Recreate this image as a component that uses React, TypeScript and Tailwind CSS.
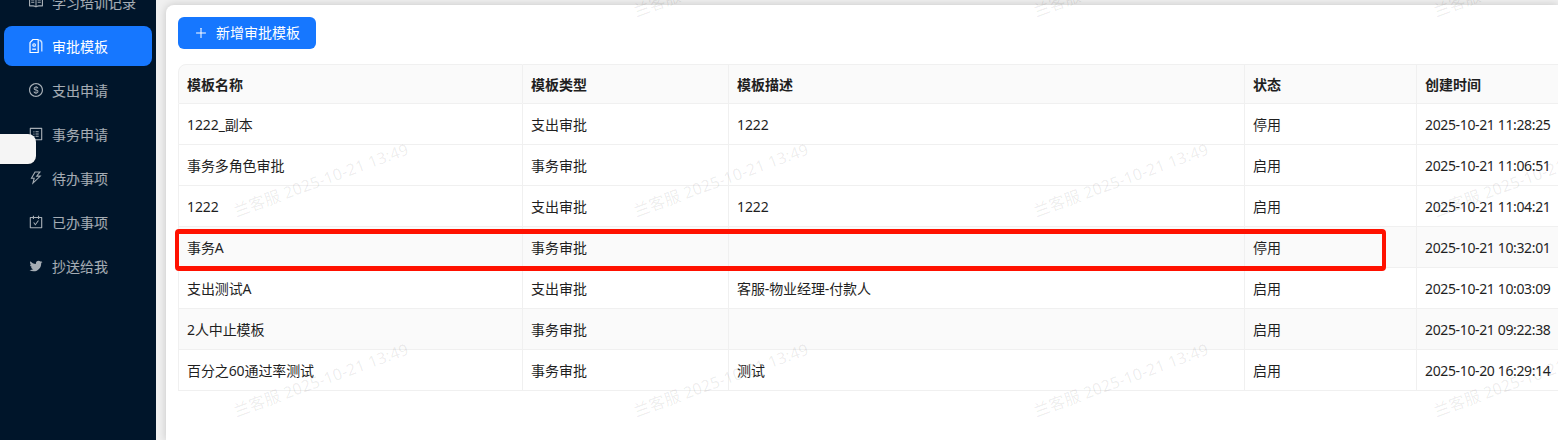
import {
  AiOutlineRead,
  AiOutlineDollar,
  AiOutlineProfile,
  AiOutlineThunderbolt,
  AiOutlineCarryOut,
  AiOutlineTwitter,
  AiOutlinePlus,
} from "react-icons/ai"

// template icon: page with a cut corner and a second sheet behind it
function TemplateIcon({ className }: { className?: string }) {
  return (
    <svg viewBox="0 0 16 16" fill="none" stroke="currentColor" className={className}>
      <path d="M2 4.6 5 1.5h5.2v13H2z" strokeWidth="1.2" strokeLinejoin="round" />
      <circle cx="6.1" cy="7" r="1.3" strokeWidth="1.1" />
      <path d="M4.2 11.2h3.8" strokeWidth="1.2" />
      <path d="M11.4 2c1.4.5 2.4 1.6 2.4 3.2v8.3" strokeWidth="1.4" opacity="0.75" />
    </svg>
  )
}

const menu = [
  { label: "学习培训记录", icon: AiOutlineRead },
  { label: "审批模板", icon: TemplateIcon, active: true },
  { label: "支出申请", icon: AiOutlineDollar },
  { label: "事务申请", icon: AiOutlineProfile },
  { label: "待办事项", icon: AiOutlineThunderbolt },
  { label: "已办事项", icon: AiOutlineCarryOut },
  { label: "抄送给我", icon: AiOutlineTwitter },
]

const rows = [
  { name: "1222_副本", type: "支出审批", desc: "1222", status: "停用", time: "2025-10-21 11:28:25" },
  { name: "事务多角色审批", type: "事务审批", desc: "", status: "启用", time: "2025-10-21 11:06:51" },
  { name: "1222", type: "支出审批", desc: "1222", status: "启用", time: "2025-10-21 11:04:21" },
  { name: "事务A", type: "事务审批", desc: "", status: "停用", time: "2025-10-21 10:32:01", shaded: true },
  { name: "支出测试A", type: "支出审批", desc: "客服-物业经理-付款人", status: "启用", time: "2025-10-21 10:03:09" },
  { name: "2人中止模板", type: "事务审批", desc: "", status: "启用", time: "2025-10-21 09:22:38", shaded: true },
  { name: "百分之60通过率测试", type: "事务审批", desc: "测试", status: "启用", time: "2025-10-20 16:29:14" },
]

const headers = ["模板名称", "模板类型", "模板描述", "状态", "创建时间"]

// watermark tiles repeat every 400 x 200
const marks = [
  [635, 18], [1035, 18], [1435, 18],
  [235, 218], [635, 218], [1035, 218], [1435, 218],
  [235, 418], [635, 418], [1035, 418], [1435, 418],
]

export default function App() {
  return (
    <div
      className="relative flex h-[440px] w-[1558px] overflow-hidden bg-[#f0f0f0] text-sm text-[#1f1f1f]"
      style={{ fontFamily: '"Noto Sans", "Noto Sans CJK SC", sans-serif' }}
    >
      {/* Sidebar */}
      <div className="w-[156px] shrink-0 overflow-hidden bg-[#00152a]">
        <div className="-mt-[18px] flex flex-col gap-1 px-1">
          {menu.map((item) => (
            <div
              key={item.label}
              className={`flex h-10 items-center gap-2 rounded-lg pl-6 ${
                item.active ? "bg-[#1677ff] text-white" : "text-white/65"
              }`}
            >
              <item.icon className="h-4 w-4 shrink-0" />
              <span className="pt-px whitespace-nowrap">{item.label}</span>
            </div>
          ))}
        </div>
      </div>

      {/* Content */}
      <div className="min-w-0 flex-1 pt-[5px] pl-2.5">
        <div className="h-full rounded-tl-lg bg-white p-3 shadow-[0_0_8px_rgba(0,0,0,0.18)]">
          <button className="mb-[15px] flex h-8 w-[138px] items-center gap-2 rounded-md bg-[#1677ff] px-4 text-white">
            <AiOutlinePlus className="h-3.5 w-3.5" />
            <span className="whitespace-nowrap">新增审批模板</span>
          </button>

          <table className="w-[1500px] table-fixed border-separate border-spacing-0">
            <colgroup>
              <col className="w-[345px]" />
              <col className="w-[206px]" />
              <col className="w-[516px]" />
              <col className="w-[172px]" />
              <col />
            </colgroup>
            <thead>
              <tr>
                {headers.map((h, i) => (
                  <th
                    key={h}
                    className={`h-10 border-t border-r border-b border-[#f0f0f0] bg-[#fafafa] pt-0.5 pl-2 text-left font-semibold ${
                      i === 0 ? "rounded-tl-lg border-l" : ""
                    }`}
                  >
                    {h}
                  </th>
                ))}
              </tr>
            </thead>
            <tbody>
              {rows.map((r) => (
                <tr key={r.time} className={r.shaded ? "bg-[#fafafa]" : ""}>
                  <td className="h-[41px] border-r border-b border-l border-[#f0f0f0] pt-0.5 pl-2 tracking-[-0.1px]">{r.name}</td>
                  <td className="border-r border-b border-[#f0f0f0] pt-0.5 pl-2">{r.type}</td>
                  <td className="border-r border-b border-[#f0f0f0] pt-0.5 pl-2 tracking-[-0.1px]">{r.desc}</td>
                  <td className="border-r border-b border-[#f0f0f0] pt-0.5 pl-2">{r.status}</td>
                  <td className="border-r border-b border-[#f0f0f0] pt-0.5 pl-2 tracking-[-0.36px] whitespace-nowrap">{r.time}</td>
                </tr>
              ))}
            </tbody>
          </table>
        </div>
      </div>

      {/* Floating handle over the sidebar */}
      <div className="absolute top-[134px] left-0 h-[30px] w-9 rounded-r-lg bg-[#f5f5f5] shadow-[0_1px_2px_rgba(0,0,0,0.2)]" />

      {/* Red annotation box */}
      <div className="absolute top-[229px] left-[175px] h-[42px] w-[1211px] rounded-sm border-x-4 border-y-[5px] border-[#ff1100]" />

      {/* Watermarks */}
      {marks.map(([x, y]) => (
        <span
          key={`${x}-${y}`}
          className="pointer-events-none absolute origin-bottom-left -rotate-[20deg] text-base leading-none tracking-[0.2px] whitespace-nowrap text-black/[0.08]"
          style={{ left: x + 2, top: y - 15 }}
        >
          兰客服 2025-10-21 13:49
        </span>
      ))}
    </div>
  )
}
